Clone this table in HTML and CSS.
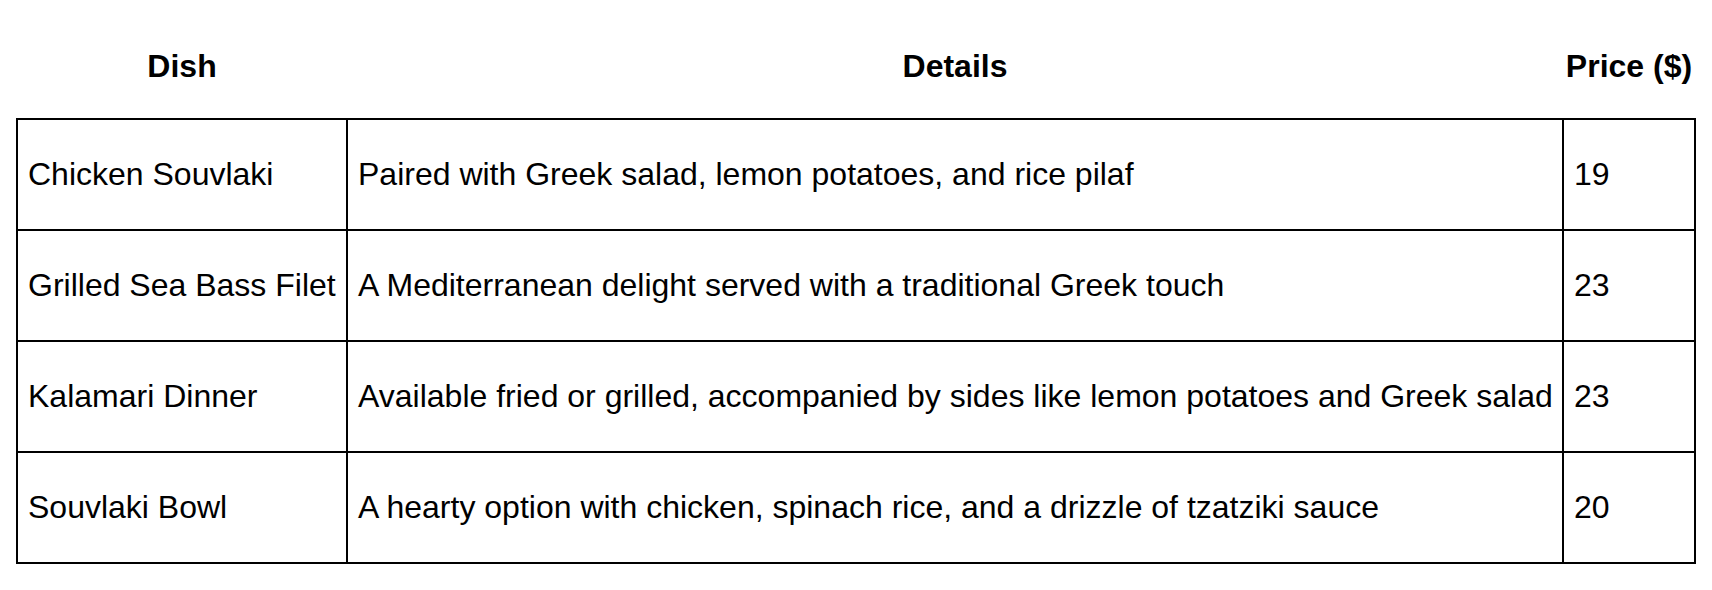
FILE: index.html
```html
<!DOCTYPE html>
<html lang="en">
<head>
<meta charset="utf-8">
<title>Menu</title>
<link rel="stylesheet" href="styles.css">
</head>
<body>
<table class="menu">
  <colgroup>
    <col class="col-dish">
    <col class="col-details">
    <col class="col-price">
  </colgroup>
  <thead>
    <tr>
      <th>Dish</th>
      <th>Details</th>
      <th>Price ($)</th>
    </tr>
  </thead>
  <tbody>
    <tr>
      <td>Chicken Souvlaki</td>
      <td>Paired with Greek salad, lemon potatoes, and rice pilaf</td>
      <td>19</td>
    </tr>
    <tr>
      <td>Grilled Sea Bass Filet</td>
      <td>A Mediterranean delight served with a traditional Greek touch</td>
      <td>23</td>
    </tr>
    <tr>
      <td>Kalamari Dinner</td>
      <td>Available fried or grilled, accompanied by sides like lemon potatoes and Greek salad</td>
      <td>23</td>
    </tr>
    <tr>
      <td>Souvlaki Bowl</td>
      <td>A hearty option with chicken, spinach rice, and a drizzle of tzatziki sauce</td>
      <td>20</td>
    </tr>
  </tbody>
</table>
</body>
</html>
```

FILE: styles.css
```css
html, body {
  background: #ffffff;
}

body {
  margin: 16px;
  font-family: "Liberation Sans", Arial, Helvetica, sans-serif;
  font-size: 32px;
  color: #000000;
}

.menu {
  width: 100%;
  border-collapse: collapse;
  table-layout: fixed;
}

.col-dish {
  width: 330px;
}

.col-price {
  width: 132px;
}

.menu th {
  font-weight: bold;
  text-align: center;
  padding: 32px 2px 33px;
  white-space: nowrap;
}

.menu td {
  border: 2px solid #000000;
  padding: 36px 10px;
  text-align: left;
  white-space: nowrap;
}
```
